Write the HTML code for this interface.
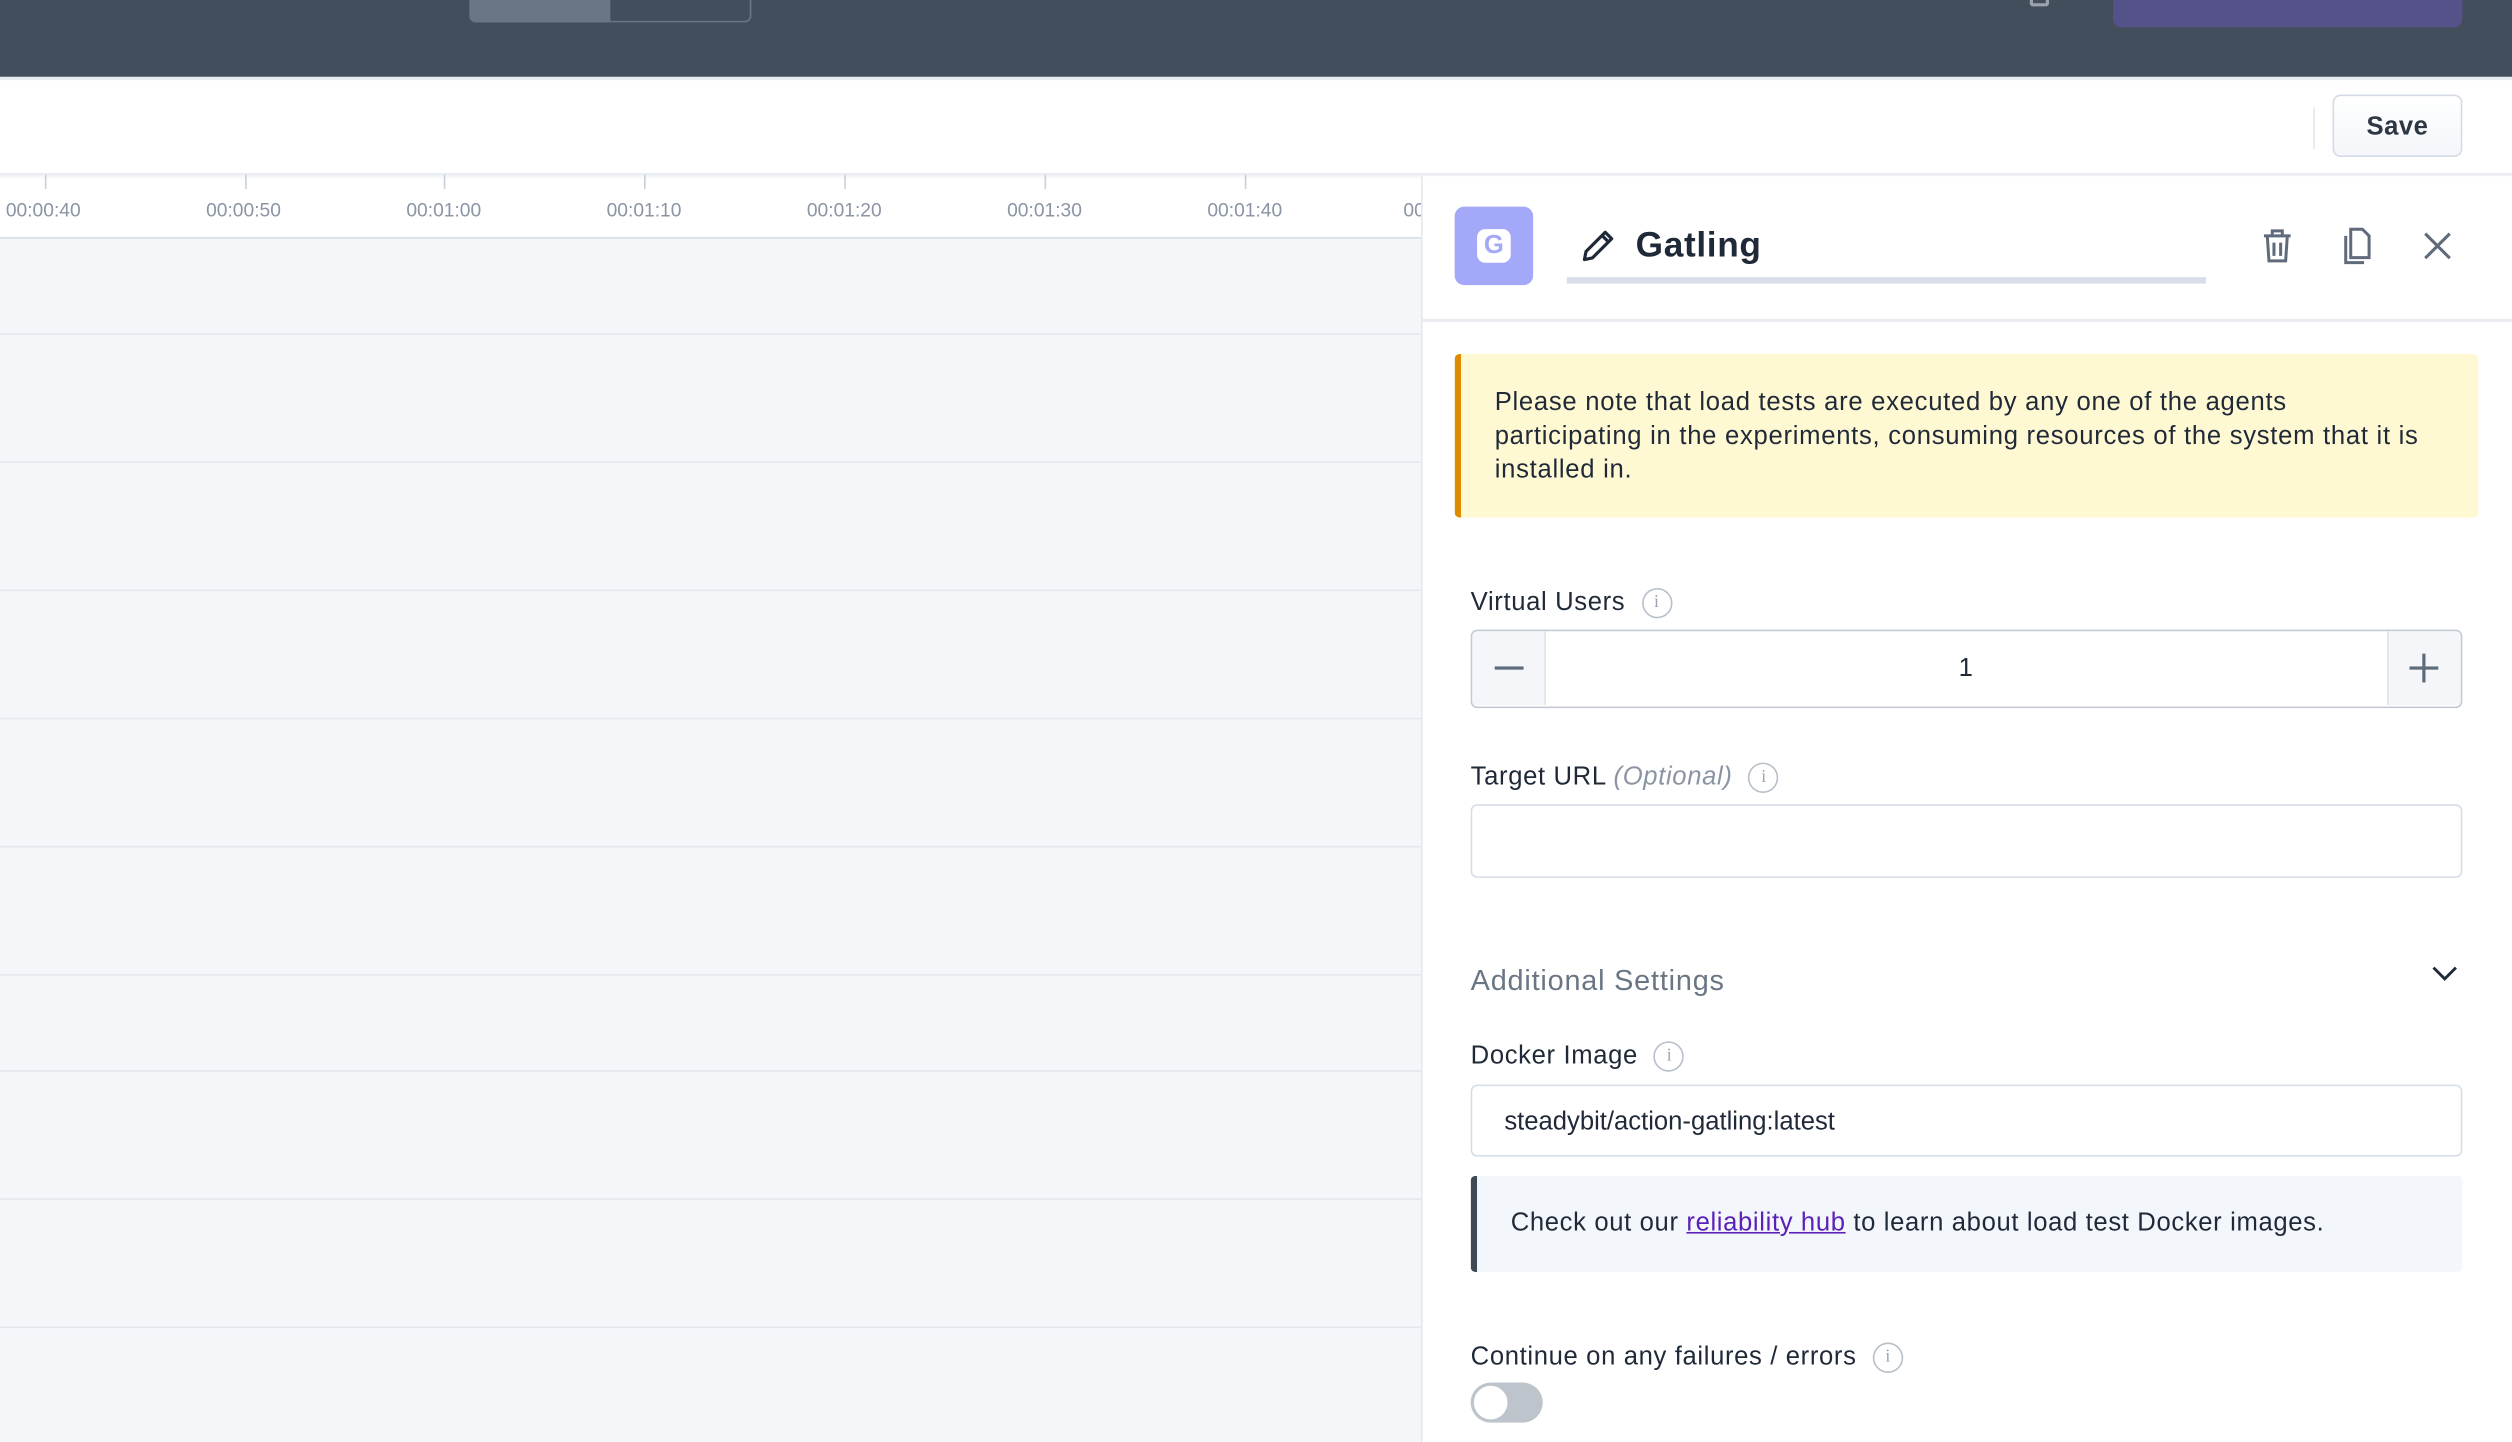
<!DOCTYPE html>
<html><head><meta charset="utf-8"><style>
*{box-sizing:border-box;margin:0;padding:0}
html,body{width:2512px;height:1442px;overflow:hidden;background:#fff}
#w{position:absolute;left:0;top:0;width:1568px;height:900px;transform:scale(1.60204);transform-origin:0 0;font-family:"Liberation Sans",sans-serif;color:#1f2937}
.a{position:absolute}
.lbl{position:absolute;font-size:16px;color:#1f2937;left:918px;letter-spacing:0.4px}
.info{display:inline-block;width:19px;height:19px;border:1.5px solid #b7bfca;border-radius:50%;color:#9aa3af;font-size:11px;text-align:center;line-height:16px;vertical-align:middle;margin-left:10px;font-family:"Liberation Serif",serif;letter-spacing:0}
.tick{position:absolute;top:109px;width:1px;height:9px;background:#c9d0da}
.tl{position:absolute;top:124px;font-size:12px;color:#8a94a3;width:80px;text-align:center}
.hl{position:absolute;left:0;width:887px;height:1px;background:#e3e7ee}
</style></head><body><div id="w">
<div class="a" style="left:0;top:0;width:1568px;height:48px;background:#434e5c"></div>
<div class="a" style="left:293px;top:-4px;width:176px;height:18px;border:1px solid #6b7685;border-radius:0 0 4px 4px"></div>
<div class="a" style="left:293px;top:-4px;width:88px;height:18px;background:#6b7685;border-radius:0 0 0 4px"></div>
<div class="a" style="left:1267px;top:-4px;width:12px;height:8px;border:2px solid #9aa3af;border-radius:2px"></div>
<div class="a" style="left:1319px;top:-4px;width:218px;height:21px;background:#55528a;border-radius:0 0 5px 5px"></div>
<div class="a" style="left:0;top:48px;width:1568px;height:60px;background:#fff;border-top:2px solid #e8ecf1"></div>
<div class="a" style="left:1444px;top:67px;width:1px;height:26px;background:#e3e7ee"></div>
<div class="a" style="left:1456px;top:59px;width:81px;height:39px;border:1px solid #d5dbe5;border-radius:5px;background:linear-gradient(#fff,#f3f6fa);font-weight:bold;font-size:16px;color:#2d3642;text-align:center;line-height:39px;letter-spacing:0.3px">Save</div>
<div class="a" style="left:0;top:108px;width:1568px;height:4px;background:linear-gradient(#e6eaf0,rgba(255,255,255,0))"></div>
<div class="a" style="left:0;top:148px;width:887px;height:752px;background:#f4f6fa;border-top:1px solid #d8dee6"></div>
<div class="tick" style="left:28px"></div><div class="tick" style="left:153px"></div><div class="tick" style="left:277px"></div><div class="tick" style="left:402px"></div><div class="tick" style="left:527px"></div><div class="tick" style="left:652px"></div><div class="tick" style="left:777px"></div>
<div class="tl" style="left:-13px">00:00:40</div><div class="tl" style="left:112px">00:00:50</div><div class="tl" style="left:237px">00:01:00</div><div class="tl" style="left:362px">00:01:10</div><div class="tl" style="left:487px">00:01:20</div><div class="tl" style="left:612px">00:01:30</div><div class="tl" style="left:737px">00:01:40</div><div class="tl" style="left:876px;text-align:left;width:11px;overflow:hidden">00</div>
<div class="hl" style="top:208px"></div><div class="hl" style="top:288px"></div><div class="hl" style="top:368px"></div><div class="hl" style="top:448px"></div><div class="hl" style="top:528px"></div><div class="hl" style="top:608px"></div><div class="hl" style="top:668px"></div><div class="hl" style="top:748px"></div><div class="hl" style="top:828px"></div>
<div class="a" style="left:887px;top:110px;width:681px;height:790px;background:#fff;border-left:1px solid #e3e7ee"></div>
<div class="a" style="left:908px;top:129px;width:49px;height:49px;background:#a3a8f8;border-radius:6px"></div>
<div class="a" style="left:922px;top:143px;width:21px;height:21px;background:#fff;border-radius:5px;color:#a3a8f8;font-weight:bold;font-size:16px;text-align:center;line-height:21px">G</div>
<svg class="a" style="left:986px;top:141px" width="24" height="24" viewBox="0 0 24 24" fill="none" stroke="#1f2937" stroke-width="2" stroke-linejoin="round"><path d="M3 21l1-5L16 4l4 4L8 20z M14 6l4 4"/></svg>
<div class="a" style="left:1021px;top:140px;font-size:22px;font-weight:bold;color:#1f2937;letter-spacing:0.4px">Gatling</div>
<div class="a" style="left:978px;top:173px;width:399px;height:4px;background:#d8dee9"></div>
<svg class="a" style="left:1409px;top:141px" width="25" height="25" viewBox="0 0 24 24" fill="none" stroke="#5f6b7a" stroke-width="1.8"><path d="M4 6h16M9 6V3h6v3M6 6l1 15h10l1-15M10 10v8M14 10v8"/></svg>
<svg class="a" style="left:1459px;top:141px" width="25" height="25" viewBox="0 0 24 24" fill="none" stroke="#5f6b7a" stroke-width="1.8"><path d="M8 2h7l4 4v13H8z M5 6v16h11"/></svg>
<svg class="a" style="left:1510px;top:142px" width="23" height="23" viewBox="0 0 24 24" fill="none" stroke="#5f6b7a" stroke-width="2"><path d="M4 4l16 16M20 4L4 20"/></svg>
<div class="a" style="left:888px;top:199px;width:680px;height:2px;background:#e8ecf1"></div>
<div class="a" style="left:908px;top:221px;width:639px;height:102px;background:#fef9d3;border-left:4px solid #e08a00;border-radius:3px;padding:20px 10px 0 21px;font-size:16px;line-height:21px;color:#1f2937;letter-spacing:0.45px;white-space:nowrap">Please note that load tests are executed by any one of the agents<br>participating in the experiments, consuming resources of the system that it is<br>installed in.</div>
<div class="lbl" style="top:367px">Virtual Users<span class="info">i</span></div>
<div class="a" style="left:918px;top:393px;width:619px;height:49px;border:1.5px solid #c4cad3;border-radius:4px;overflow:hidden">
<div class="a" style="left:0;top:0;width:46px;height:46px;background:#f4f6fa;border-right:1px solid #dde2e9"></div>
<div class="a" style="left:14px;top:22px;width:18px;height:2px;background:#5f6b7a"></div>
<div class="a" style="right:0;top:0;width:46px;height:46px;background:#f4f6fa;border-left:1px solid #dde2e9"></div>
<div class="a" style="right:14px;top:22px;width:18px;height:2px;background:#5f6b7a"></div>
<div class="a" style="right:22px;top:14px;width:2px;height:18px;background:#5f6b7a"></div>
<div class="a" style="left:0;width:616px;top:15px;text-align:center;font-size:16px">1</div></div>
<div class="lbl" style="top:476px">Target URL <i style="color:#8a94a3">(Optional)</i><span class="info">i</span></div>
<div class="a" style="left:918px;top:502px;width:619px;height:46px;border:1.5px solid #d5dde8;border-radius:4px"></div>
<div class="a" style="left:918px;top:602px;font-size:18px;color:#6b7685;letter-spacing:0.5px">Additional Settings</div>
<svg class="a" style="left:1517px;top:601px" width="18" height="14" viewBox="0 0 18 14" fill="none" stroke="#1f2937" stroke-width="1.8"><path d="M2 3l7 7 7-7"/></svg>
<div class="lbl" style="top:650px">Docker Image<span class="info">i</span></div>
<div class="a" style="left:918px;top:677px;width:619px;height:45px;border:1.5px solid #d5dde8;border-radius:4px;padding:14px 0 0 20px;font-size:16px">steadybit/action-gatling:latest</div>
<div class="a" style="left:918px;top:734px;width:619px;height:60px;background:#f3f6fb;border-left:4px solid #3f4a57;border-radius:3px;padding:21px 0 0 21px;font-size:16px;letter-spacing:0.4px">Check out our <span style="color:#5b21b6;text-decoration:underline">reliability hub</span> to learn about load test Docker images.</div>
<div class="lbl" style="top:838px">Continue on any failures / errors<span class="info">i</span></div>
<div class="a" style="left:918px;top:863px;width:45px;height:25px;background:#bec4cc;border-radius:13px"></div>
<div class="a" style="left:920px;top:865px;width:21px;height:21px;background:#fff;border-radius:50%"></div>
</div></body></html>
